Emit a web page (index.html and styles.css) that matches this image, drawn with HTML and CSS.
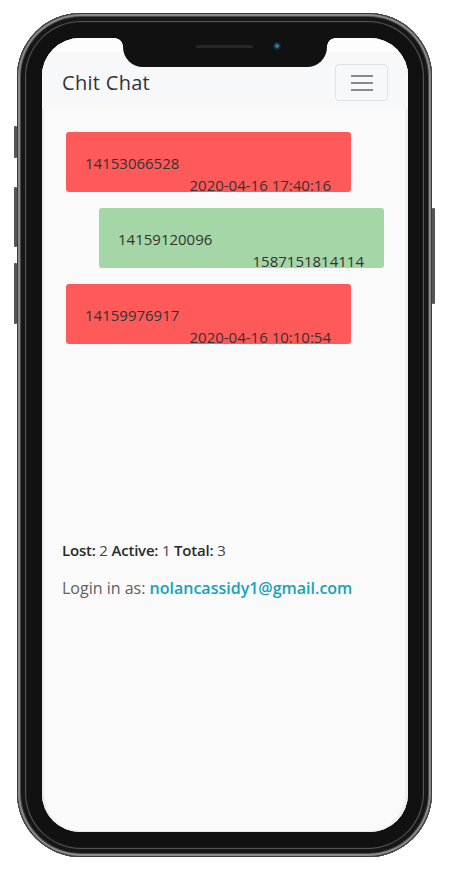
FILE: index.html
```html
<!DOCTYPE html>
<html>
<head>
<meta charset="utf-8">
<title>Chit Chat</title>
<link rel="stylesheet" href="styles.css">
</head>
<body>
<div class="phone">
  <span class="btn btn-l1"></span>
  <span class="btn btn-l2"></span>
  <span class="btn btn-l3"></span>
  <span class="btn btn-r1"></span>
  <div class="screen">
    <div class="notch"><span class="speaker"></span><span class="camera"></span></div>
    <div class="status"></div>
    <nav class="navbar">
      <span class="brand">Chit Chat</span>
      <button class="toggler" aria-label="menu">
        <svg width="24" height="18" viewBox="0 0 24 18"><path d="M1 2h22M1 9h22M1 16h22" stroke="#8a8a8a" stroke-width="2"/></svg>
      </button>
    </nav>
    <main class="content">
      <div class="messages">
        <div class="msg lost">
          <div class="num">14153066528</div>
          <div class="time">2020-04-16 17:40:16</div>
        </div>
        <div class="msg active">
          <div class="num">14159120096</div>
          <div class="time">1587151814114</div>
        </div>
        <div class="msg lost">
          <div class="num">14159976917</div>
          <div class="time">2020-04-16 10:10:54</div>
        </div>
      </div>
      <p class="stats"><b>Lost:</b> 2 <b>Active:</b> 1 <b>Total:</b> 3</p>
      <p class="login">Login in as: <a class="email" href="#">nolancassidy1@gmail.com</a></p>
    </main>
  </div>
</div>
</body>
</html>
```
FILE: styles.css
```css
html, body {
  margin: 0;
  padding: 0;
  background: #ffffff;
}
body {
  font-family: "Open Sans", "Noto Sans", sans-serif;
  color: #333;
}
.phone {
  position: relative;
  box-sizing: border-box;
  width: 415px;
  height: 844px;
  margin: 13px 0 0 17px;
  padding: 25px 24px 25px 25px;
  border-radius: 64px;
  background: #111;
  box-shadow:
    inset 0 0 0 1px #3a3a3a,
    inset 0 0 0 3px #8a8a8a,
    inset 0 0 0 4px #4a4a4a,
    inset 0 0 0 8px #161616,
    inset 0 0 0 9px #555,
    inset 0 0 0 10px #1a1a1a;
}
.btn {
  position: absolute;
  width: 3px;
  background: #555;
  border-radius: 1px;
}
.btn-l1 { left: -3px; top: 113px; height: 32px; }
.btn-l2 { left: -3px; top: 174px; height: 60px; }
.btn-l3 { left: -3px; top: 250px; height: 61px; }
.btn-r1 { right: -3px; top: 195px; height: 96px; }
.screen {
  position: relative;
  width: 366px;
  height: 794px;
  border-radius: 38px;
  overflow: hidden;
  background: #fafafa;
  display: flex;
  flex-direction: column;
  box-shadow: inset 2px 0 0 #ececec, inset -3px 0 0 #efefef, inset 0 -1px 0 #e6e6e6;
}
.notch {
  position: absolute;
  top: 0;
  left: 81px;
  width: 204px;
  height: 29px;
  background: #111;
  border-radius: 0 0 20px 20px;
}
.notch::before, .notch::after {
  content: "";
  position: absolute;
  top: 0;
  width: 8px;
  height: 8px;
}
.notch::before {
  left: -8px;
  background: radial-gradient(circle at 0 100%, transparent 7.5px, #111 8px);
}
.notch::after {
  right: -8px;
  background: radial-gradient(circle at 100% 100%, transparent 7.5px, #111 8px);
}
.speaker {
  position: absolute;
  left: 73px;
  top: 7px;
  width: 57px;
  height: 3px;
  border-radius: 2px;
  background: #262626;
}
.camera {
  position: absolute;
  left: 150px;
  top: 4px;
  width: 8px;
  height: 8px;
  border-radius: 50%;
  background: radial-gradient(circle, #3fb3c9 0, #1d6a7a 1.5px, #1b2a33 3px, #141a1e 4px);
}
.status {
  height: 14px;
  background: #fdfdfd;
  flex: none;
}
.navbar {
  flex: none;
  display: flex;
  justify-content: space-between;
  align-items: center;
  padding: 12px 20px 7px 20px;
  background: #f7f8f9;
}
.brand {
  font-size: 20px;
  line-height: 30px;
  color: #333;
  letter-spacing: 0.3px;
}
.toggler {
  box-sizing: border-box;
  width: 53px;
  height: 37px;
  border: 1px solid #e2e2e2;
  border-radius: 4px;
  background: transparent;
  display: flex;
  align-items: center;
  justify-content: center;
  padding: 0;
}
.toggler svg { display: block; }
.content {
  padding: 24px 20px 0 20px;
}
.messages {
  display: flex;
  flex-direction: column;
  gap: 16px;
  padding-left: 4px;
  height: 406px;
}
.msg {
  box-sizing: border-box;
  width: 285px;
  height: 60px;
  padding: 20px 20px 0 19px;
  border-radius: 3px;
  font-size: 15px;
  line-height: 22px;
  color: #333;
}
.msg.lost { background: #ff5a5a; }
.msg.active { background: #a5d6a7; margin-left: 33px; }
.time { text-align: right; }
.stats, .login {
  margin: 0;
  font-size: 16px;
  line-height: 24px;
}
.stats { color: #444; margin-bottom: 14px; font-size: 15px; letter-spacing: -0.2px; }
.stats b { font-weight: 600; color: #2a2a2a; }
.login { color: #606060; }
.email {
  color: #17a2b8;
  font-weight: 600;
  text-decoration: none;
}
```
